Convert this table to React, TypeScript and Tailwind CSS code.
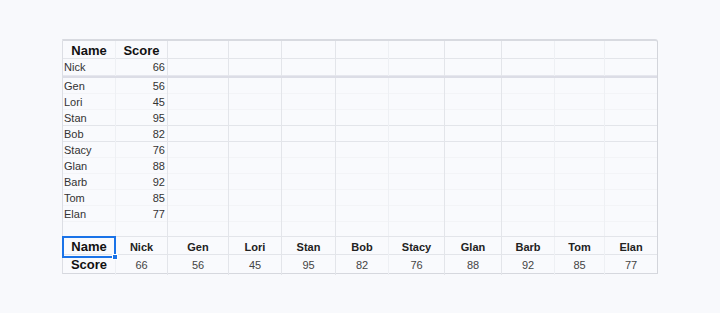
import React from 'react';

// column widths in px (first column sits after the 1px card border)
const GRID = 'grid grid-cols-[53px_52px_61px_53px_54px_53px_56px_57px_53px_50px_52px]';

// columns whose gridline is barely drawn in the sheet
const FAINT = [0, 5, 8, 9];

const rows = [
  { name: 'Gen', score: 56 },
  { name: 'Lori', score: 45 },
  { name: 'Stan', score: 95 },
  { name: 'Bob', score: 82 },
  { name: 'Stacy', score: 76 },
  { name: 'Glan', score: 88 },
  { name: 'Barb', score: 92 },
  { name: 'Tom', score: 85 },
  { name: 'Elan', score: 77 },
];

const cellBorder = (i: number) => {
  if (i === 10) return '';
  return FAINT.includes(i) ? 'border-r border-r-[#eef0f4]' : 'border-r border-r-[#e3e5ea]';
};

const Row: React.FC<{ className: string; cells: React.ReactNode[] }> = ({ className, cells }) => (
  <div className={`${GRID} ${className}`}>
    {Array.from({ length: 11 }).map((_, i) => (
      <div key={i} className={`relative flex items-center min-w-0 ${cellBorder(i)}`}>
        {cells[i]}
      </div>
    ))}
  </div>
);

const App: React.FC = () => {
  const people = [{ name: 'Nick', score: 66 }, ...rows];

  return (
    <div
      className="min-h-screen bg-[#f8f9fc] pt-[39px] pl-[62px]"
      style={{ fontFamily: '"Liberation Sans", Arial, sans-serif' }}
    >
      <div className="w-[596px] bg-[#f9fafd] border-t-2 border-t-[#d8dae0] border-l border-l-[#dcdee4] border-r border-r-[#d3d5db] border-b border-b-[#d6d8de] rounded-tr-[3px]">
        {/* frozen header */}
        <Row
          className="h-[18px] border-b border-b-[#e3e5ea]"
          cells={[
            <span className="w-full text-center text-[13px] font-bold text-[#111]">Name</span>,
            <span className="w-full text-center text-[13px] font-bold text-[#111]">Score</span>,
          ]}
        />
        <Row
          className="h-[16px]"
          cells={[
            <span className="pl-px text-[11px] text-[#333]">Nick</span>,
            <span className="w-full pr-[2px] text-right text-[11px] text-[#333]">66</span>,
          ]}
        />
        {/* freeze bar */}
        <div className="h-[3px] bg-[#dcdde6] border-t border-t-[#e6e7ee]" />

        {rows.map((r) => (
          <Row
            key={r.name}
            className={`h-4 border-b ${r.name === 'Stan' || r.name === 'Bob' ? 'border-b-[#e3e5ea]' : 'border-b-[#f3f4f7]'}`}
            cells={[
              <span className="pl-px text-[11px] text-[#333]">{r.name}</span>,
              <span className="w-full pr-[2px] text-right text-[11px] text-[#333]">{r.score}</span>,
            ]}
          />
        ))}
        <Row className="h-[15px] border-b border-b-[#e3e5ea]" cells={[]} />

        {/* transposed table */}
        <div className={`${GRID} h-[18px] border-b border-b-[#e3e5ea]`}>
          {['Name', ...people.map((p) => p.name)].map((n, i) => (
            <div key={n} className={`relative flex items-center justify-center ${cellBorder(i)}`}>
              {i === 0 ? (
                <>
                  <span className="text-[13px] font-bold text-[#111]">{n}</span>
                  <div className="absolute -inset-px border-2 border-[#1a73e8] z-10" />
                  <div className="absolute -right-[3px] -bottom-[3px] w-[6px] h-[6px] bg-[#1a73e8] border border-white z-20" />
                </>
              ) : (
                <span className="text-[11px] font-bold text-[#222]">{n}</span>
              )}
            </div>
          ))}
        </div>
        <div className={`${GRID} h-[18px]`}>
          {['Score', ...people.map((p) => String(p.score))].map((n, i) => (
            <div key={i} className={`flex items-center justify-center ${cellBorder(i)}`}>
              {i === 0 ? (
                <span className="text-[13px] font-bold text-[#111]">{n}</span>
              ) : (
                <span className="text-[11px] text-[#444]">{n}</span>
              )}
            </div>
          ))}
        </div>
      </div>
    </div>
  );
};

export default App;
